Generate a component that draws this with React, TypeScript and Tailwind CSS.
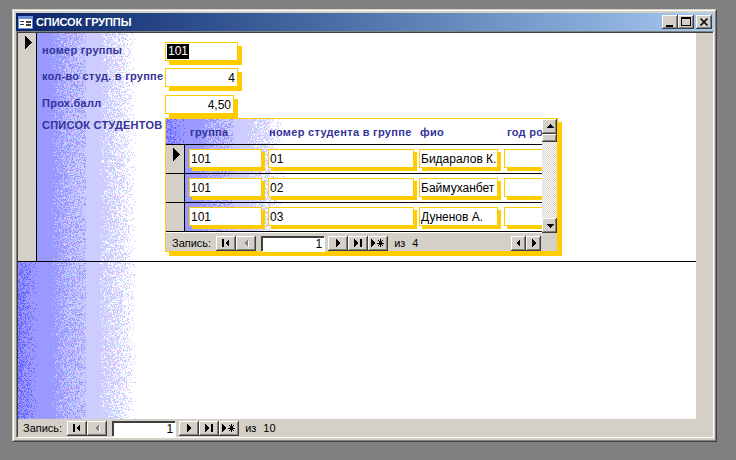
import React from "react";

function rng(seed: number) {
  let a = seed >>> 0;
  return () => {
    a = (a + 0x6d2b79f5) >>> 0;
    let t = a;
    t = Math.imul(t ^ (t >>> 15), t | 1);
    t ^= t + Math.imul(t ^ (t >>> 7), t | 61);
    return ((t ^ (t >>> 14)) >>> 0) / 4294967296;
  };
}

function Dither({ width, height, offset = 0, seed = 7 }: { width: number; height: number; offset?: number; seed?: number }) {
  const paths = React.useMemo(() => {
    const r = rng(seed);
    const out: Record<string, string> = {};
    const add = (c: string, x: number, y: number) => {
      out[c] = (out[c] || "") + `M${x} ${y}h1v1h-1z`;
    };
    for (let y = 0; y < height; y++) {
      for (let d = 0; d < 118; d++) {
        const x = d - offset;
        const n = r();
        const n2 = r();
        if (x < 0 || x >= width) continue;
        if (d < 20) {
          if (n < 0.55 * (1 - d / 20)) add("#6666ff", x, y);
        } else if (d >= 33 && d < 68) {
          const p = (d - 33) / 35;
          if (n < 0.75 * p) add("#ccccff", x, y);
          else if (n < 0.75 * p + 0.22 * (1 - Math.abs(p - 0.5) * 1.7)) add(n2 < 0.5 ? "#cc99ff" : "#99ccff", x, y);
        } else if (d >= 68 && d < 82) {
          add("#ccccff", x, y);
        } else if (d >= 82) {
          const p = (d - 82) / 36;
          if (n < 0.9 * (1 - p)) add("#ccccff", x, y);
          else if (n < 0.9 * (1 - p) + 0.22 * (1 - Math.abs(p - 0.5) * 1.7)) add(n2 < 0.5 ? "#ffccff" : "#ccffff", x, y);
        }
      }
    }
    return out;
  }, [width, height, offset, seed]);
  const firstBand = Math.max(0, 68 - offset);
  return (
    <svg className="absolute left-0 top-0" width={width} height={height} shapeRendering="crispEdges" aria-hidden>
      <rect x={0} y={0} width={Math.min(firstBand, width)} height={height} fill="#9999ff" />
      {Object.entries(paths).map(([c, d]) => (
        <path key={c} d={d} fill={c} />
      ))}
    </svg>
  );
}

function Icon({ name, disabled }: { name: string; disabled?: boolean }) {
  const c = disabled ? "#808080" : "#000";
  const arrowR = (x: number) => `M${x} 3v8l4-4z`;
  const arrowL = (x: number) => `M${x} 3v8l-4-4z`;
  return (
    <svg width="20" height="15" viewBox="0 0 20 15" shapeRendering="crispEdges" className="absolute left-0 top-0">
      {name === "first" && <path d={`M6 3h2v8H6z${arrowL(13)}`} fill={c} />}
      {name === "prev" && (
        <>
          <path d={arrowL(12)} fill="#fff" transform="translate(1 1)" />
          <path d={arrowL(12)} fill={c} />
        </>
      )}
      {name === "next" && <path d={arrowR(8)} fill={c} />}
      {name === "last" && <path d={`${arrowR(6)}M12 3h2v8h-2z`} fill={c} />}
      {name === "new" && (
        <>
          <path d={arrowR(3)} fill={c} />
          <path d="M12.5 3v8M9 7h7M10 4l5 6M15 4l-5 6" stroke={c} strokeWidth="1" fill="none" />
        </>
      )}
    </svg>
  );
}

function NavBtn({ name, disabled }: { name: string; disabled?: boolean }) {
  return (
    <div className="relative h-[15px] w-[20px] bg-[#d4d0c8] shadow-[inset_-1px_-1px_0_#404040,inset_1px_1px_0_#ffffff,inset_-2px_-2px_0_#808080]">
      <Icon name={name} disabled={disabled} />
    </div>
  );
}

function Nav({ total }: { total: string }) {
  return (
    <div className="flex items-center text-[11px] leading-none text-black font-['Liberation_Sans',sans-serif]">
      <span className="mr-[5px]">Запись:</span>
      <NavBtn name="first" />
      <NavBtn name="prev" disabled />
      <div className="ml-[5px] mr-[4px] flex h-[15px] w-[63px] items-center justify-end border-l-2 border-t-2 border-[#404040] bg-white pr-[2px] text-[12px] shadow-[1px_1px_0_#ffffff]">
        1
      </div>
      <NavBtn name="next" />
      <NavBtn name="last" />
      <NavBtn name="new" />
      <span className="ml-[6px]">из</span>
      <span className="ml-[7px]">{total}</span>
    </div>
  );
}

function Cell({ text, w, className = "" }: { text: string; w: string; className?: string }) {
  return (
    <div className={`flex h-[19px] shrink-0 items-center overflow-hidden border border-[#ffcc00] bg-white pl-[1px] text-[12px] text-black shadow-[3px_3px_0_#ffcc00] ${w} ${className}`}>
      <span className="whitespace-nowrap">{text}</span>
    </div>
  );
}

function Row({ group, num, name, current }: { group: string; num: string; name: string; current?: boolean }) {
  return (
    <div className="flex h-[29px] border-b border-black">
      <div className="flex w-[19px] shrink-0 items-start border-r border-black bg-[#d4d0c8] pl-[7px] pt-[3px]">
        {current && (
          <svg width="8" height="13" viewBox="0 0 8 13" shapeRendering="crispEdges">
            <path d="M0 0l7 6.5L0 13z" fill="#000" />
          </svg>
        )}
      </div>
      <div className="relative flex flex-1 items-start overflow-hidden pt-[4px]">
        <Dither width={357} height={28} offset={19} seed={num.charCodeAt(1) * 131} />
        <div className="relative flex pl-[4px]">
          <Cell text={group} w="w-[73px]" />
          <Cell text={num} w="w-[146px]" className="ml-[6px]" />
          <Cell text={name} w="w-[79px]" className="ml-[5px]" />
          <Cell text="" w="w-[60px]" className="ml-[6px]" />
        </div>
      </div>
    </div>
  );
}

function ScrollBtn({ dir }: { dir: "up" | "down" | "left" | "right" }) {
  const d = { up: "M4 9h8L8 5z", down: "M4 6h8L8 10z", left: "M9 3v8L5 7z", right: "M6 3v8l4-4z" }[dir];
  return (
    <div className="relative h-[15px] w-[15px] shrink-0 bg-[#d4d0c8] shadow-[inset_-1px_-1px_0_#404040,inset_1px_1px_0_#ffffff,inset_-2px_-2px_0_#808080]">
      <svg width="15" height="15" viewBox="0 0 15 15" shapeRendering="crispEdges" className="absolute left-0 top-0">
        <path d={d} fill="#000" />
      </svg>
    </div>
  );
}

function Subform() {
  const head = "absolute top-[6px] whitespace-nowrap text-[11px] font-bold leading-[14px] tracking-[0.3px] text-[#333399]";
  return (
    <div className="mt-[-1px] flex h-[134px] w-[393px] flex-col border border-[#ffcc00] bg-white shadow-[4px_4px_0_#ffcc00]">
      <div className="flex h-[114px] overflow-hidden">
        <div className="flex w-[376px] flex-col overflow-hidden">
          <div className="relative h-[26px] shrink-0 overflow-hidden border-b border-black">
            <Dither width={376} height={25} seed={3} />
            <span className={`${head} left-[24px]`}>группа</span>
            <span className={`${head} left-[103px]`}>номер студента в группе</span>
            <span className={`${head} left-[254px]`}>фио</span>
            <span className={`${head} left-[341px]`}>год рождения</span>
          </div>
          <Row group="101" num="01" name="Бидаралов К." current />
          <Row group="101" num="02" name="Баймуханбет" />
          <Row group="101" num="03" name="Дуненов А." />
        </div>
        <div className="flex w-[15px] shrink-0 flex-col bg-[repeating-conic-gradient(#d4d0c8_0_25%,#ffffff_0_50%)] bg-[length:2px_2px]">
          <ScrollBtn dir="up" />
          <div className="h-[8px] shrink-0 bg-[#d4d0c8] shadow-[inset_-1px_-1px_0_#404040,inset_1px_1px_0_#ffffff,inset_-2px_-2px_0_#808080]" />
          <div className="flex-1" />
          <ScrollBtn dir="down" />
        </div>
      </div>
      <div className="flex flex-1 items-center bg-[#d4d0c8] pl-[6px] pt-[2px]">
        <Nav total="4" />
        <div className="ml-auto mr-[16px] flex">
          <ScrollBtn dir="left" />
          <ScrollBtn dir="right" />
        </div>
      </div>
    </div>
  );
}

function TopField({ text, w, selected, mb }: { text: string; w: string; selected?: boolean; mb: string }) {
  return (
    <div className={`flex h-[19px] items-center border border-[#ffcc00] bg-white text-[12px] text-black shadow-[4px_4px_0_#ffcc00] ${w} ${mb} ${selected ? "justify-start pl-[1px]" : "justify-end pr-[2px]"}`}>
      {selected ? <span className="bg-black px-[1px] leading-[15px] text-white">{text}</span> : text}
    </div>
  );
}

export default function App() {
  const label = "h-[14px] whitespace-nowrap text-[11px] font-bold leading-[14px] tracking-[0.25px] text-[#333399]";
  return (
    <div className="h-[460px] w-[736px] overflow-hidden bg-[#808080] pl-[12px] pt-[9px] font-['Liberation_Sans',sans-serif]">
      <div className="h-[433px] w-[705px] border border-[#d4d0c8] border-b-[#404040] border-r-[#404040]">
        <div className="flex h-full flex-col border border-white border-b-[#808080] border-r-[#808080] bg-[#d4d0c8] pb-[2px] pl-[2px] pr-[1px] pt-[2px]">
          <div className="flex h-[18px] shrink-0 items-center bg-gradient-to-r from-[#0a246a] to-[#a6caf0] pl-[2px] pr-[2px]">
            <svg width="15" height="13" viewBox="0 0 15 13" shapeRendering="crispEdges">
              <rect width="15" height="13" fill="#6b8fd4" />
              <rect x="1" y="3" width="13" height="9" fill="#fff" />
              <path d="M2 5h4v1H2zM2 8h4v1H2zM8 5h5v2H8zM8 8h5v2H8z" fill="#404040" />
            </svg>
            <span className="ml-[3px] whitespace-nowrap text-[11px] font-bold tracking-[-0.1px] text-white">СПИСОК ГРУППЫ</span>
            <div className="ml-auto flex">
              {["min", "max"].map((b) => (
                <div key={b} className="relative h-[14px] w-[16px] bg-[#d4d0c8] shadow-[inset_-1px_-1px_0_#404040,inset_1px_1px_0_#ffffff,inset_-2px_-2px_0_#808080]">
                  <svg width="16" height="14" viewBox="0 0 16 14" shapeRendering="crispEdges" className="absolute left-0 top-0">
                    {b === "min" ? <path d="M4 10h7v2H4z" fill="#000" /> : <path d="M3 2h10v2H3zM3 4h1v7H3zM12 4h1v7h-1zM3 10h10v1H3z" fill="#000" />}
                  </svg>
                </div>
              ))}
              <div className="relative ml-[2px] h-[14px] w-[16px] bg-[#d4d0c8] shadow-[inset_-1px_-1px_0_#404040,inset_1px_1px_0_#ffffff,inset_-2px_-2px_0_#808080]">
                <svg width="16" height="14" viewBox="0 0 16 14" className="absolute left-0 top-0">
                  <path d="M4.5 3.5l7 7M11.5 3.5l-7 7" stroke="#000" strokeWidth="1.6" fill="none" />
                </svg>
              </div>
            </div>
          </div>
          <div className="min-h-0 flex-1 border-b border-l border-r border-t border-[#808080] border-b-white border-r-white">
            <div className="flex h-full flex-col border-l border-t border-[#404040]">
              <div className="flex min-h-0 flex-1">
                <div className="flex w-[678px] flex-col bg-white">
                  <div className="flex h-[229px] shrink-0 border-b border-black">
                    <div className="w-[19px] shrink-0 border-r border-black bg-[#d4d0c8] pl-[7px] pt-[3px]">
                      <svg width="8" height="13" viewBox="0 0 8 13" shapeRendering="crispEdges">
                        <path d="M0 0l7 6.5L0 13z" fill="#000" />
                      </svg>
                    </div>
                    <div className="relative flex-1">
                      <Dither width={659} height={228} offset={19} seed={11} />
                      <div className="relative grid grid-cols-[123px_1fr] pl-[5px] pt-[9px]">
                        <div className="flex flex-col">
                          <div className={`${label} mb-[12px] mt-[1px]`}>номер группы</div>
                          <div className={`${label} mb-[13px]`}>кол-во студ. в группе</div>
                          <div className={`${label} mb-[8px]`}>Прох.балл</div>
                          <div className={label}>СПИСОК СТУДЕНТОВ</div>
                        </div>
                        <div className="flex flex-col">
                          <TopField text="101" w="w-[73px]" selected mb="mb-[7px]" />
                          <TopField text="4" w="w-[73px]" mb="mb-[8px]" />
                          <TopField text="4,50" w="w-[69px]" mb="mb-[5px]" />
                          <Subform />
                        </div>
                      </div>
                    </div>
                  </div>
                  <div className="relative flex-1 overflow-hidden">
                    <Dither width={678} height={158} seed={23} />
                  </div>
                </div>
                <div className="flex-1 bg-[#d4d0c8]" />
              </div>
              <div className="flex h-[18px] shrink-0 items-center bg-[#d4d0c8] pl-[5px]">
                <Nav total="10" />
              </div>
            </div>
          </div>
        </div>
      </div>
    </div>
  );
}
